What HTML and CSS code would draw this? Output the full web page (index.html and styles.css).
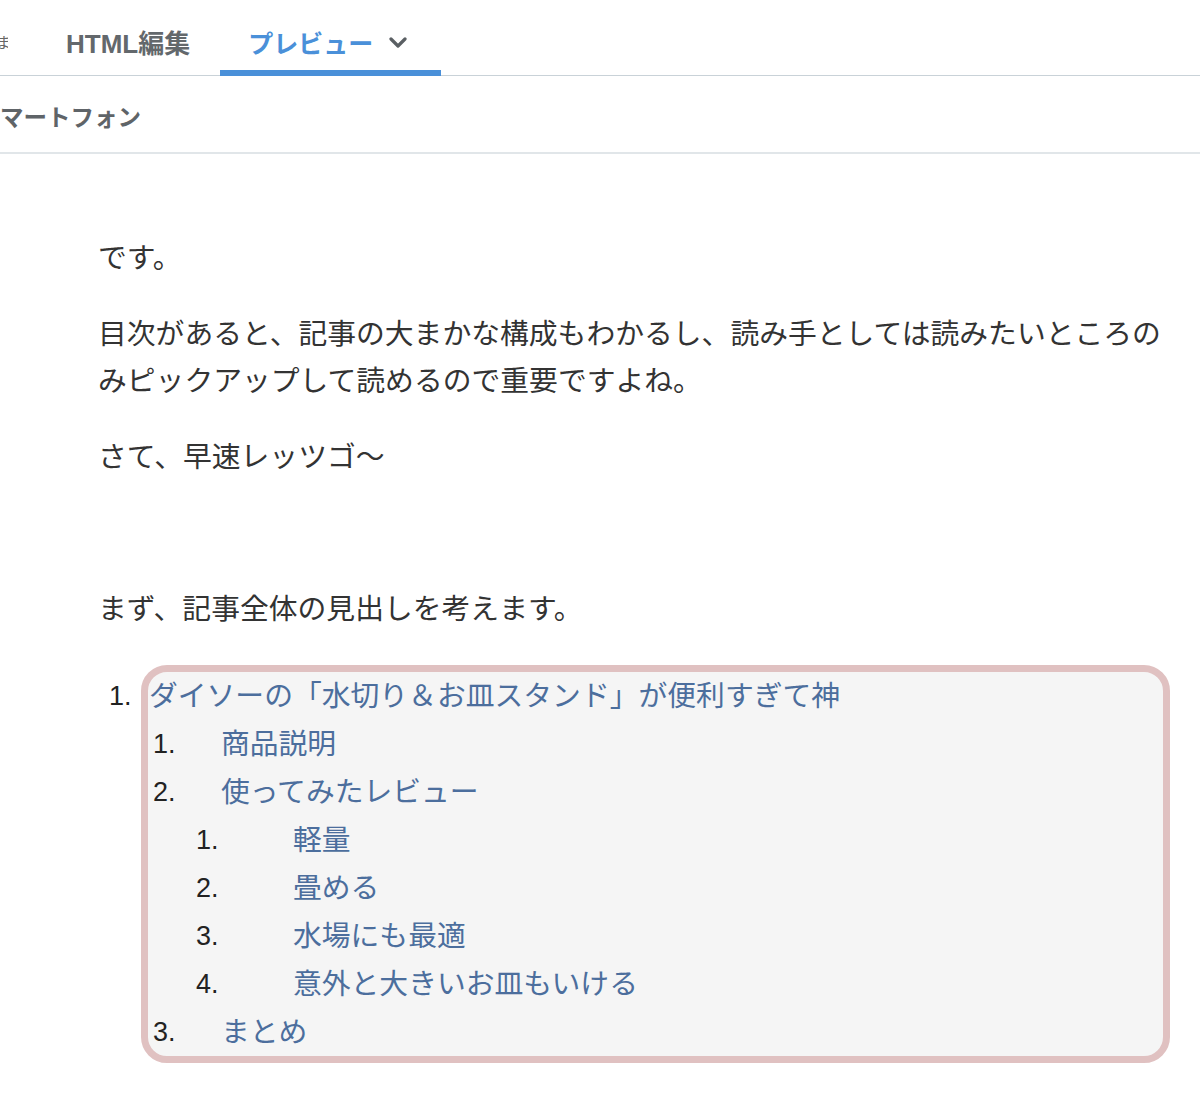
FILE: index.html
```html
<!DOCTYPE html>
<html lang="ja">
<head>
<meta charset="utf-8">
<title>プレビュー</title>
<link rel="stylesheet" href="styles.css">
</head>
<body>
<div class="tabs">
  <span class="tab-cut">ま</span>
  <span class="tab">HTML編集</span>
  <span class="tab active">プレビュー
    <svg class="chev" width="18" height="12" viewBox="0 0 18 12"><path d="M2 2 L9 9 L16 2" fill="none" stroke="#5a5f63" stroke-width="3.2" stroke-linecap="round" stroke-linejoin="round"/></svg>
  </span>
</div>
<div class="subbar"><span class="device">マートフォン</span></div>
<main class="content">
  <p>です。</p>
  <p>目次があると、記事の大まかな構成もわかるし、読み手としては読みたいところのみピックアップして読めるので重要ですよね。</p>
  <p>さて、早速レッツゴ〜</p>
  <p>&nbsp;</p>
  <p>まず、記事全体の見出しを考えます。</p>
  <div class="toc">
    <span class="outer-num">1.</span>
    <div class="box">
      <div class="row lv0"><span class="txt">ダイソーの「水切り＆お皿スタンド」が便利すぎて神</span></div>
      <div class="row lv1"><span class="num">1.</span><span class="txt">商品説明</span></div>
      <div class="row lv1"><span class="num">2.</span><span class="txt">使ってみたレビュー</span></div>
      <div class="row lv2"><span class="num">1.</span><span class="txt">軽量</span></div>
      <div class="row lv2"><span class="num">2.</span><span class="txt">畳める</span></div>
      <div class="row lv2"><span class="num">3.</span><span class="txt">水場にも最適</span></div>
      <div class="row lv2"><span class="num">4.</span><span class="txt">意外と大きいお皿もいける</span></div>
      <div class="row lv1"><span class="num">3.</span><span class="txt">まとめ</span></div>
    </div>
  </div>
</main>
</body>
</html>
```

FILE: styles.css
```css
* { box-sizing: border-box; }
html, body { margin: 0; padding: 0; background: #fff; }
body {
  font-family: "Liberation Sans", "Noto Sans CJK JP", sans-serif;
  color: #333;
}

.tabs {
  height: 76px;
  display: flex;
  align-items: stretch;
  padding-top: 8px;
  border-bottom: 1px solid #c9d2d8;
}
.tab-cut {
  display: flex;
  align-items: center;
  font-size: 15px;
  color: #666;
  width: 12px;
  overflow: hidden;
  margin-left: -4px;
}
.tab {
  display: flex;
  align-items: center;
  padding: 0 30px 0 28px;
  font-size: 26px;
  font-weight: bold;
  color: #63686c;
  margin-left: 30px;
}
.tab.active {
  margin-left: 0;
  font-size: 25px;
  color: #4a90d9;
  border-bottom: 6px solid #4a90d9;
  margin-bottom: -1px;
  padding: 5px 34px 0 28px;
}
.chev { margin-left: 16px; margin-top: 2px; }

.subbar {
  height: 78px;
  display: flex;
  align-items: center;
  border-bottom: 2px solid #e1e6e9;
}
.device {
  font-size: 23.5px;
  font-weight: bold;
  color: #5f6468;
  padding-top: 4px;
}

.content {
  padding: 81px 30px 40px 98px;
  font-size: 28.8px;
}
.content p {
  margin: 0 0 29px;
  line-height: 47px;
}

.toc {
  display: flex;
  align-items: flex-start;
  margin-top: 32px;
}
.outer-num {
  width: 43px;
  line-height: 48px;
  padding-top: 7px;
  padding-left: 11px;
  color: #222;
  font-size: 27px;
}
.box {
  width: 1031px;
  border: 7px solid #e0c1c1;
  border-radius: 26px;
  background: #f5f5f5;
}
.row {
  display: flex;
  line-height: 48px;
  height: 48px;
  white-space: nowrap;
}
.txt { color: #4c6e9d; }
.num { color: #222; font-size: 27px; }
.lv0 { padding-left: 1px; }
.lv1 { padding-left: 5px; }
.lv1 .num { width: 68px; }
.lv2 { padding-left: 48px; }
.lv2 .num { width: 97px; }
```
